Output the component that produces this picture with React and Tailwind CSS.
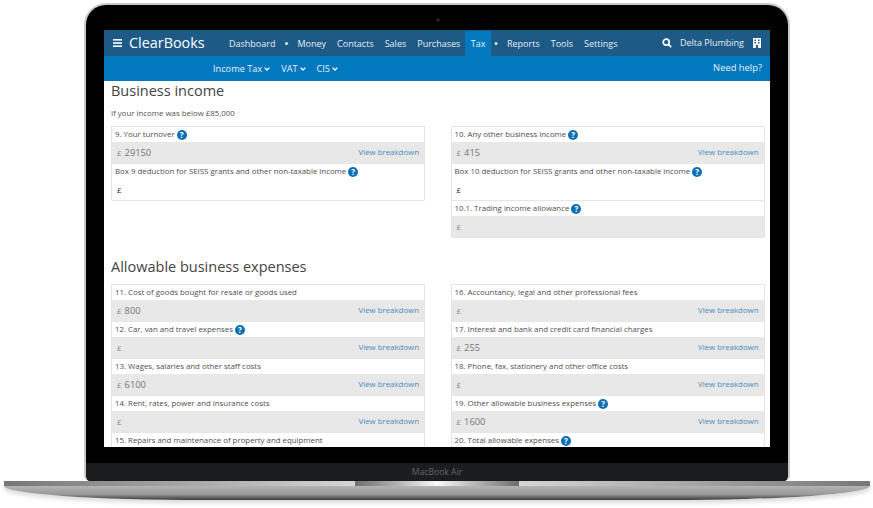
const Help = () => (
  <span className="inline-flex w-[10px] h-[10px] rounded-full bg-[#0c6fb3] text-white text-[8px] font-bold items-center justify-center ml-[2px] leading-none align-middle">
    ?
  </span>
);

const Field = ({ label, help, value, breakdown, white }) => (
  <div className="border-t border-[#e6e6e6] first:border-t-0">
    <div className="h-[15px] pl-[3px] flex items-center text-[7.85px] text-[#4f4f4f] whitespace-nowrap">
      {label}
      {help && <Help />}
    </div>
    <div
      className={`h-[21px] pl-[5px] pr-[5px] flex items-center justify-between ${
        white ? "bg-white" : "bg-[#e8e8e8]"
      }`}
    >
      <div className="flex items-center">
        <span className={`text-[8px] ${white ? "text-[#333]" : "text-[#888]"}`}>£</span>
        {value && <span className="text-[9.3px] text-[#777] ml-[3px]">{value}</span>}
      </div>
      {breakdown && <span className="text-[7.85px] text-[#4a8cc0]">View breakdown</span>}
    </div>
  </div>
);

const Card = ({ children }) => (
  <div className="border border-[#e3e3e3] rounded-[1px] bg-white">{children}</div>
);

const navItems = ["Dashboard", "•", "Money", "Contacts", "Sales", "Purchases", "Tax", "•", "Reports", "Tools", "Settings"];

const leftExpenses = [
  { label: "11. Cost of goods bought for resale or goods used", value: "800" },
  { label: "12. Car, van and travel expenses", help: true },
  { label: "13. Wages, salaries and other staff costs", value: "6100" },
  { label: "14. Rent, rates, power and insurance costs" },
  { label: "15. Repairs and maintenance of property and equipment" },
];

const rightExpenses = [
  { label: "16. Accountancy, legal and other professional fees" },
  { label: "17. Interest and bank and credit card financial charges", value: "255" },
  { label: "18. Phone, fax, stationery and other office costs" },
  { label: "19. Other allowable business expenses", help: true, value: "1600" },
  { label: "20. Total allowable expenses", help: true },
];

const App = () => {
  return (
    <div className="relative w-[873px] h-[508px] overflow-hidden bg-white font-['Open_Sans',sans-serif]">
      {/* Lid */}
      <div className="ml-[84px] mt-[3px] w-[706px] h-[478px] rounded-t-[22px] rounded-b-[6px] border-[2px] border-b-0 border-[#c9c9cb] bg-black flex flex-col overflow-hidden">
        <div className="relative h-[25px] shrink-0">
          <div className="absolute left-[350px] top-[13px] w-[4px] h-[4px] rounded-full bg-[#222]" />
        </div>
        <div className="mx-[18px] h-[417px] bg-white overflow-hidden shrink-0">
          {/* Top nav */}
          <div className="h-[26px] bg-[#1e5a86] flex items-center text-white">
            <svg className="ml-[9px]" width="9" height="8" viewBox="0 0 9 8" fill="#fff">
              <rect width="9" height="1.6" />
              <rect y="3.2" width="9" height="1.6" />
              <rect y="6.4" width="9" height="1.6" />
            </svg>
            <div className="ml-[7px] w-[94.5px] text-[14.4px] leading-none whitespace-nowrap">
              <span className="font-medium">Clear</span>Books
            </div>
            <div className="flex h-full items-end text-[9px] text-[#e6eef4] whitespace-nowrap">
              {navItems.map((item, i) => (
                <div
                  key={i}
                  className={`h-[25px] flex items-center ${item === "Tax" ? "bg-[#0279bf] px-[6px] mx-[-1px]" : item === "•" ? "w-[10px] justify-center mx-[0.5px] font-bold" : "px-[5.5px]"}`}
                >
                  {item}
                </div>
              ))}
            </div>
            <div className="ml-auto flex items-center text-[9px] text-[#e6eef4] whitespace-nowrap">
              <svg width="10" height="10" viewBox="0 0 10 10" fill="none" stroke="#fff" strokeWidth="1.7">
                <circle cx="4.2" cy="4.2" r="3" />
                <path d="M6.4 6.4 9.2 9.2" />
              </svg>
              <span className="ml-[8px]">Delta Plumbing</span>
              <svg className="ml-[9px] mr-[9px]" width="8" height="10" viewBox="0 0 8 10">
                <rect width="8" height="10" fill="#fff" />
                <rect x="1.5" y="1.5" width="1.5" height="1.5" fill="#1e5a86" />
                <rect x="5" y="1.5" width="1.5" height="1.5" fill="#1e5a86" />
                <rect x="1.5" y="4" width="1.5" height="1.5" fill="#1e5a86" />
                <rect x="5" y="4" width="1.5" height="1.5" fill="#1e5a86" />
                <rect x="3" y="7" width="2" height="3" fill="#1e5a86" />
              </svg>
            </div>
          </div>
          {/* Sub nav */}
          <div className="h-[25px] bg-[#0279bf] flex items-center text-[9.2px] text-[#e6eef4] whitespace-nowrap">
            <div className="ml-[109px] flex items-center gap-[11px]">
              {["Income Tax", "VAT", "CIS"].map((item) => (
                <span key={item} className="flex items-center">
                  {item}
                  <svg className="ml-[2px] mt-[1px]" width="6" height="4" viewBox="0 0 6 4" fill="none" stroke="#fff" strokeWidth="1.3">
                    <path d="M.6.6 3 3 5.4.6" />
                  </svg>
                </span>
              ))}
            </div>
            <span className="ml-auto mr-[8px] text-[9.4px]">Need help?</span>
          </div>
          {/* Page body */}
          <div className="px-[7px]">
            <h2 className="text-[14.5px] leading-[20px] text-[#444]">Business income</h2>
            <p className="text-[7.85px] leading-[12px] text-[#555] mt-[6px]">If your income was below £85,000</p>
            <div className="grid grid-cols-[314px_314px] gap-x-[25.5px] mt-[7px] items-start">
              <Card>
                <Field label="9. Your turnover" help value="29150" breakdown />
                <Field label="Box 9 deduction for SEISS grants and other non-taxable income" help white />
              </Card>
              <Card>
                <Field label="10. Any other business income" help value="415" breakdown />
                <Field label="Box 10 deduction for SEISS grants and other non-taxable income" help white />
                <Field label="10.1. Trading income allowance" help />
              </Card>
            </div>
            <h2 className="text-[14.5px] leading-[20px] text-[#444] mt-[19px]">Allowable business expenses</h2>
            <div className="grid grid-cols-[314px_314px] gap-x-[25.5px] mt-[7px] items-start">
              <Card>
                {leftExpenses.map((row) => (
                  <Field key={row.label} {...row} breakdown />
                ))}
              </Card>
              <Card>
                {rightExpenses.map((row) => (
                  <Field key={row.label} {...row} breakdown />
                ))}
              </Card>
            </div>
          </div>
        </div>
        {/* Chin */}
        <div className="mt-[16px] flex-1 bg-[#1a1c1e] flex items-center justify-center pt-[1px] text-[8.6px] text-[#666]">
          MacBook Air
        </div>
      </div>
      {/* Base */}
      <div className="relative ml-[4px] w-[866px] h-[19px] rounded-b-[200px_14px] bg-gradient-to-b from-[#c4c4c4] via-[#9a9a9a] via-70% to-[#3c3c3c] overflow-hidden shadow-[0_3px_4px_rgba(0,0,0,0.15)]">
        <div className="h-[5px] bg-gradient-to-r from-[#777] from-0% via-[#ededed] via-50% to-[#777] to-100%" />
        <div className="absolute left-[351px] top-0 w-[164px] h-[5px] bg-gradient-to-r from-[#6e6e6e] via-[#fafafa] via-50% to-[#6e6e6e]" />
      </div>
    </div>
  );
};

export default App;
